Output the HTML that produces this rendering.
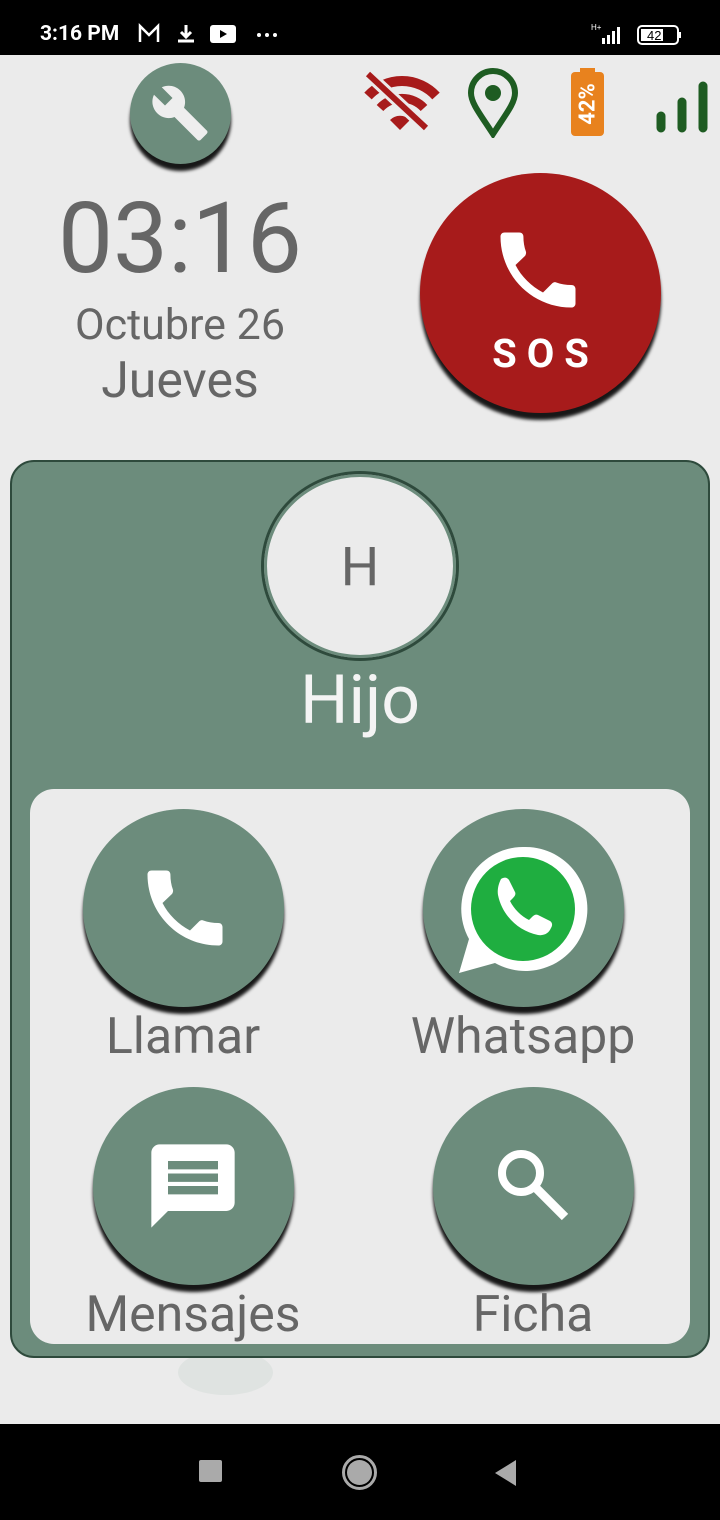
<!DOCTYPE html>
<html><head><meta charset="utf-8"><style>
*{margin:0;padding:0;box-sizing:border-box}
body{width:720px;height:1520px;background:#ebebeb;position:relative;overflow:hidden;font-family:"Roboto","Liberation Sans",sans-serif}
.abs{position:absolute}
.circ{position:absolute;border-radius:50%;box-shadow:0 7px 3px rgba(0,0,0,.9)}
.t{position:absolute;text-align:center;color:#666;white-space:nowrap}
</style></head><body>
<div class="abs" style="left:178px;top:1350px;width:95px;height:45px;border-radius:50%;background:#dfe3e1"></div>
<div class="abs" style="left:0;top:0;width:720px;height:55px;background:#000"></div>
<div class="abs" style="left:40px;top:22px;color:#fff;font-size:21px;font-weight:bold">3:16 PM</div>
<svg class="abs" style="left:138px;top:22px" width="150" height="26" viewBox="0 0 150 26">
<path d="M2 20V4l9 9 9-9v16" fill="none" stroke="#fff" stroke-width="2.5"/>
<path d="M48 3v11M43 10l5 5 5-5M40 19h16" fill="none" stroke="#fff" stroke-width="3"/>
<rect x="72" y="3" width="26" height="18" rx="3" fill="#fff"/><path d="M82 8l7 4-7 4z" fill="#000"/>
<circle cx="121" cy="13" r="2" fill="#fff"/><circle cx="129" cy="13" r="2" fill="#fff"/><circle cx="137" cy="13" r="2" fill="#fff"/>
</svg>
<svg class="abs" style="left:588px;top:22px" width="100" height="26" viewBox="0 0 100 26">
<text x="3" y="8" fill="#fff" font-size="8" font-family="Liberation Sans">H+</text>
<path d="M14 22h3v-6h-3zM19 22h3v-9h-3zM24 22h3v-13h-3zM29 22h3v-17h-3z" fill="#fff"/>
<rect x="50" y="4" width="40" height="18" rx="4" fill="none" stroke="#fff" stroke-width="2"/>
<rect x="53" y="7" width="22" height="12" fill="#fff"/><rect x="91" y="10" width="2" height="6" fill="#fff"/>
<text x="59" y="18" font-size="13" fill="#000" font-family="Liberation Sans">42</text>
</svg>

<div class="circ" style="left:130px;top:63px;width:101px;height:101px;background:#6c8c7c"></div>
<svg class="abs" style="left:150px;top:83px" width="60" height="60" viewBox="0 0 24 24"><path fill="#eee" d="M22.7 19l-9.1-9.1c.9-2.3.4-5-1.5-6.9-2-2-5-2.4-7.4-1.3L9 6 6 9 1.6 4.7C.4 7.1.9 10.1 2.9 12.1c1.9 1.9 4.6 2.4 6.9 1.5l9.1 9.1c.4.4 1 .4 1.4 0l2.3-2.3c.5-.4.5-1.1.1-1.4z"/></svg>

<svg class="abs" style="left:360px;top:68px" width="80" height="64" viewBox="0 0 80 64">
<path d="M8 28a46 46 0 0 1 68 0" fill="none" stroke="#a71b1b" stroke-width="10"/>
<path d="M20 40a30 30 0 0 1 44 0" fill="none" stroke="#a71b1b" stroke-width="9"/>
<path d="M30 52l10 10 10-10a14 14 0 0 0-20 0z" fill="#a71b1b"/>
<path d="M8 6l58 54" stroke="#ebebeb" stroke-width="12"/><path d="M8 6l58 54" stroke="#a71b1b" stroke-width="6"/>
</svg>
<svg class="abs" style="left:466px;top:68px" width="54" height="70" viewBox="0 0 54 70"><path d="M27 66C14 46 5 35 5 25a22 22 0 0 1 44 0c0 10-9 21-22 41z" fill="none" stroke="#1e5c22" stroke-width="6"/><circle cx="27" cy="25" r="8" fill="#1e5c22"/></svg>
<div class="abs" style="left:571px;top:72px;width:33px;height:64px;background:#e8821e;border-radius:4px"></div>
<div class="abs" style="left:580px;top:68px;width:15px;height:6px;background:#e8821e"></div>
<div class="abs" style="left:560px;top:92px;width:55px;height:24px;color:#fff;font-size:22px;font-weight:bold;transform:rotate(-90deg);text-align:center">42%</div>
<svg class="abs" style="left:650px;top:78px" width="60" height="56" viewBox="0 0 60 56"><path d="M11 38v12M32 24v26M53 8v42" stroke="#1e5c22" stroke-width="9" stroke-linecap="round"/></svg>

<div class="t" style="left:30px;width:300px;top:184px;font-size:98px;line-height:110px">03:16</div>
<div class="t" style="left:30px;width:300px;top:300px;font-size:43px">Octubre 26</div>
<div class="t" style="left:30px;width:300px;top:352px;font-size:50px">Jueves</div>

<div class="circ" style="left:420px;top:173px;width:241px;height:240px;background:#a71b1b"></div>
<svg class="abs" style="left:488px;top:220px" width="100" height="100" viewBox="0 0 24 24"><path fill="#fff" d="M6.6 10.8c1.4 2.8 3.8 5.1 6.6 6.6l2.2-2.2c.3-.3.7-.4 1-.2 1.1.4 2.3.6 3.6.6.6 0 1 .4 1 1V20c0 .6-.4 1-1 1C10.6 21 3 13.4 3 4c0-.6.4-1 1-1h3.5c.6 0 1 .4 1 1 0 1.3.2 2.5.6 3.6.1.3 0 .7-.2 1z"/></svg>
<div class="abs" style="left:420px;width:241px;text-align:center;top:330px;color:#fff;font-size:40px;font-weight:bold;letter-spacing:10px;padding-left:10px">SOS</div>

<div class="abs" style="left:10px;top:460px;width:700px;height:898px;background:#6c8c7c;border:2px solid #2e4a3c;border-radius:24px"></div>
<div class="abs" style="left:261px;top:471px;width:198px;height:190px;border-radius:50%;background:#ebebeb;border:3px solid #2e4a3c;box-shadow:inset 0 0 0 3px #6c8c7c"></div>
<div class="t" style="left:261px;width:198px;top:536px;font-size:54px">H</div>
<div class="t" style="left:200px;width:320px;top:660px;font-size:68px;color:#f4f4f4">Hijo</div>

<div class="abs" style="left:30px;top:789px;width:660px;height:555px;background:#ebebeb;border-radius:24px"></div>

<div class="circ" style="left:83px;top:809px;width:201px;height:198px;background:#6c8c7c"></div>
<svg class="abs" style="left:135px;top:858px" width="100" height="100" viewBox="0 0 24 24"><path fill="#fff" d="M6.6 10.8c1.4 2.8 3.8 5.1 6.6 6.6l2.2-2.2c.3-.3.7-.4 1-.2 1.1.4 2.3.6 3.6.6.6 0 1 .4 1 1V20c0 .6-.4 1-1 1C10.6 21 3 13.4 3 4c0-.6.4-1 1-1h3.5c.6 0 1 .4 1 1 0 1.3.2 2.5.6 3.6.1.3 0 .7-.2 1z"/></svg>
<div class="t" style="left:33px;width:300px;top:1008px;font-size:50px">Llamar</div>

<div class="circ" style="left:423px;top:809px;width:201px;height:198px;background:#6c8c7c"></div>
<svg class="abs" style="left:455px;top:843px" width="136" height="134" viewBox="0 0 136 134">
<path d="M68 4a62 62 0 0 0-54 92L4 130l36-10A62 62 0 1 0 68 4z" fill="#fff"/>
<circle cx="68" cy="66" r="52" fill="#1fae40"/>
<path d="M46 36c3-2 6-2 8 1l6 12c1 2 0 4-2 6l-3 3c4 8 11 15 19 19l3-3c2-2 4-3 6-2l12 6c2 1 3 4 1 7-2 5-7 8-13 7-20-4-36-20-40-40-1-6 1-12 3-16z" fill="#fff"/>
</svg>
<div class="t" style="left:373px;width:300px;top:1008px;font-size:50px">Whatsapp</div>

<div class="circ" style="left:93px;top:1087px;width:201px;height:198px;background:#6c8c7c"></div>
<svg class="abs" style="left:143px;top:1136px" width="100" height="100" viewBox="0 0 24 24"><path fill="#fff" d="M20 2H4c-1.1 0-2 .9-2 2v18l4-4h14c1.1 0 2-.9 2-2V4c0-1.1-.9-2-2-2zM18 14H6v-2h12v2zm0-3H6V9h12v2zm0-3H6V6h12v2z"/></svg>
<div class="t" style="left:43px;width:300px;top:1286px;font-size:50px">Mensajes</div>

<div class="circ" style="left:433px;top:1087px;width:201px;height:198px;background:#6c8c7c"></div>
<svg class="abs" style="left:493px;top:1145px" width="80" height="80" viewBox="0 0 80 80"><circle cx="28" cy="28" r="19" fill="none" stroke="#fff" stroke-width="8"/><path d="M42 42l30 30" stroke="#fff" stroke-width="9"/></svg>
<div class="t" style="left:383px;width:300px;top:1286px;font-size:50px">Ficha</div>

<div class="abs" style="left:0;top:1424px;width:720px;height:96px;background:#000"></div>
<div class="abs" style="left:199px;top:1460px;width:23px;height:22px;background:#aaa;border-radius:2px"></div>
<div class="abs" style="left:342px;top:1455px;width:35px;height:35px;border-radius:50%;border:3px solid #aaa"></div>
<div class="abs" style="left:347px;top:1460px;width:25px;height:25px;border-radius:50%;background:#aaa"></div>
<svg class="abs" style="left:493px;top:1459px" width="24" height="28"><path d="M23 1v26L2 14z" fill="#aaa"/></svg>
</body></html>
